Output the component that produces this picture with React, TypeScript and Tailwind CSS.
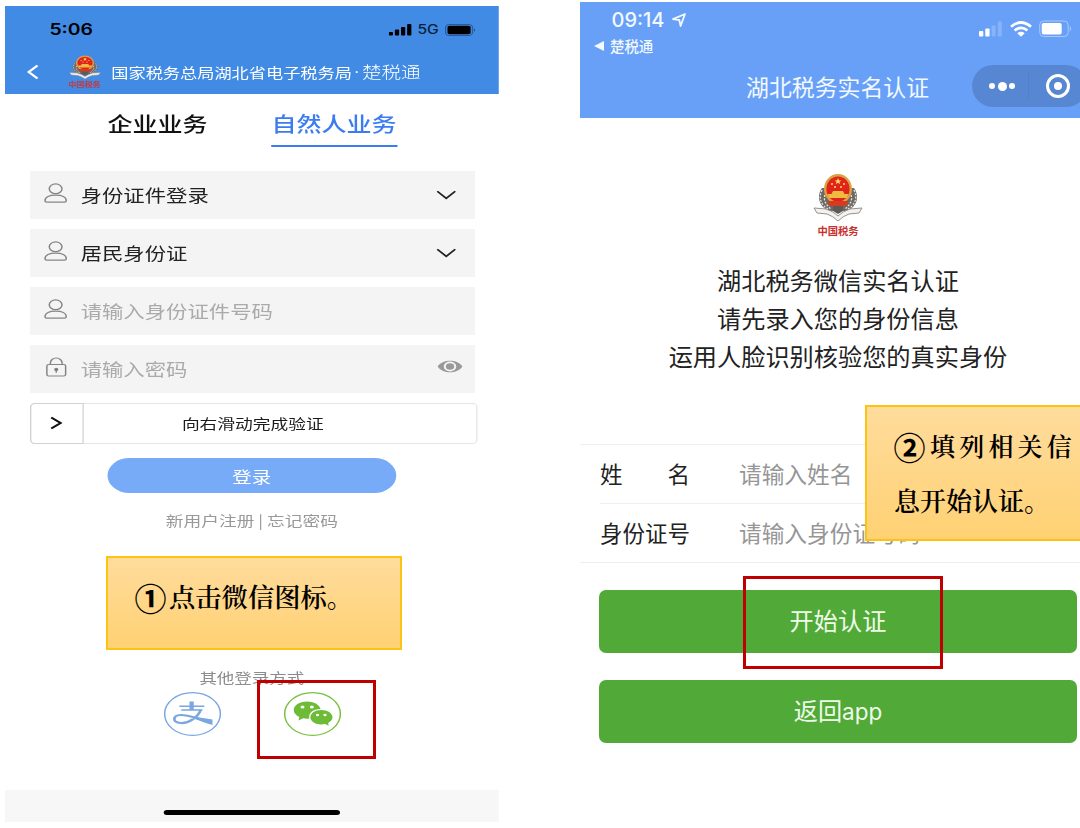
import React from "react";

const sans = "font-['Noto_Sans_CJK_SC',sans-serif]";
const serif = "font-['Noto_Serif_CJK_SC','Noto_Sans_CJK_SC',serif]";

// Emblema de la administración tributaria
const Emblem = ({ className }: { className: string }) => (
  <svg viewBox="0 0 50 50" preserveAspectRatio="none" className={className}>
    <path d="M9 15 C3 23 6 34 16 38 L34 38 C44 34 47 23 41 15 Z" fill="#6d6a66" />
    <path
      d="M9 17 C5 25 8 32 16 37 M41 17 C45 25 42 32 34 37 M12 22 C10 27 13 32 18 36 M38 22 C40 27 37 32 32 36"
      fill="none"
      stroke="#e6e2dc"
      strokeWidth={1.3}
      strokeDasharray="2 1.4"
    />
    <path
      d="M1 35 L13 36 Q20 38 25 43 Q30 38 37 36 L49 35 L46 40 L36 41 Q30 43 25 48 Q20 43 14 41 L4 40 Z"
      fill="#f4f2ef"
      stroke="#8b8783"
      strokeWidth={0.9}
    />
    <path d="M20 32 h10 v6 l-5 3 l-5 -3 Z" fill="#5d5a56" />
    <ellipse cx={25} cy={16} rx={14} ry={15} fill="#dba143" />
    <ellipse cx={25} cy={16} rx={11.6} ry={12.6} fill="#e0241b" />
    <path d="M14 28 h22 l-3 5 h-16 Z" fill="#d63a20" />
    <path
      d="M25 5 l1 2.4 h2.4 l-2 1.5 l.8 2.4 l-2.2 -1.5 l-2.2 1.5 l.8 -2.4 l-2 -1.5 h2.4 Z"
      fill="#f8dc63"
    />
    <circle cx={19} cy={11} r={1} fill="#f8dc63" />
    <circle cx={31} cy={11} r={1} fill="#f8dc63" />
    <circle cx={22} cy={14} r={1} fill="#f8dc63" />
    <circle cx={28} cy={14} r={1} fill="#f8dc63" />
    <path d="M20 18 h10 l1.5 3 h4 l-1.5 4 h-18 l-1.5 -4 h4 Z" fill="#f0b93f" />
  </svg>
);

const UserIcon = () => (
  <svg
    viewBox="0 0 19 20"
    className="h-5 w-[19px]"
    fill="none"
    stroke="#858585"
    strokeWidth={1.2}
  >
    <ellipse cx={9.5} cy={5.8} rx={5.1} ry={4.9} />
    <path d="M1 17.8 C1 14 4.5 12.2 9.5 12.2 S18 14 18 17.8 Q18 19.2 16.6 19.2 H2.4 Q1 19.2 1 17.8 Z" />
  </svg>
);

const LockIcon = () => (
  <svg
    viewBox="0 0 19 20"
    className="h-5 w-[19px]"
    fill="none"
    stroke="#858585"
    strokeWidth={1.2}
  >
    <rect x={2.5} y={7.5} width={15} height={11.5} rx={1.5} />
    <path d="M5.3 7.5 V6 a4.7 5 0 0 1 9.4 0 V7.5" />
    <path d="M10 15.8 V13" />
    <circle cx={10} cy={12.4} r={1.1} fill="#666" />
  </svg>
);

const ChevronDown = () => (
  <svg
    viewBox="0 0 16 10"
    className="h-2.5 w-4"
    fill="none"
    stroke="#222"
    strokeWidth={1.6}
  >
    <path d="M.8 1.2 L8 8.4 L15.2 1.2" />
  </svg>
);

const EyeIcon = () => (
  <svg viewBox="0 0 20 13" className="h-[13px] w-5">
    <path d="M0 6.5 C4 -1.2 16 -1.2 20 6.5 C16 14.2 4 14.2 0 6.5 Z" fill="#999" />
    <ellipse cx={10} cy={6.5} rx={5} ry={4.9} fill="#f4f4f4" />
    <circle cx={10} cy={6.5} r={3.3} fill="#999" />
  </svg>
);

const fields = [
  { text: "身份证件登录", color: "text-[#222]", icon: <UserIcon />, end: <ChevronDown /> },
  { text: "居民身份证", color: "text-[#222]", icon: <UserIcon />, end: <ChevronDown /> },
  { text: "请输入身份证件号码", color: "text-[#aaa]", icon: <UserIcon />, end: null },
  { text: "请输入密码", color: "text-[#aaa]", icon: <LockIcon />, end: <EyeIcon /> },
];

const LoginHeader = () => (
  <header className="h-[88px] bg-[#418be4]">
    <div className="flex h-12 items-center pl-[35.5px] pr-[18px] text-black">
      <span className="font-['Inter',sans-serif] text-[15.5px] font-semibold">5:06</span>
      <svg viewBox="0 0 19 12" className="ml-auto h-3 w-[19px]">
        <rect x={0} y={8} width={3.4} height={3.6} rx={0.8} />
        <rect x={4.9} y={5.6} width={3.4} height={6} rx={0.8} />
        <rect x={9.8} y={3} width={3.4} height={8.6} rx={0.8} />
        <rect x={14.7} y={0} width={3.4} height={11.6} rx={0.8} />
      </svg>
      <span className="ml-[4px] pt-0.5 font-['Inter',sans-serif] text-[12.5px] font-medium text-[#0b1f3d]">
        5G
      </span>
      <svg viewBox="0 0 25 12" className="ml-[5px] h-3 w-[25px]">
        <rect x={0.5} y={0.5} width={21.5} height={11} rx={3} fill="none" stroke="#2a5c98" />
        <rect x={2} y={1.8} width={18.5} height={8.4} rx={1.6} />
        <path d="M23.2 4.4 Q25 6 23.2 7.6 Z" fill="#1f4a80" />
      </svg>
    </div>
    <div className="flex h-9 items-center pl-[17px] text-white">
      <svg
        viewBox="0 0 10 16"
        className="h-4 w-2.5"
        fill="none"
        stroke="currentColor"
        strokeWidth={2}
      >
        <path d="M9 1.5 L2 8 L9 14.5" />
      </svg>
      <div className="ml-[23.5px] flex w-[26px] flex-col items-center">
        <Emblem className="h-[25px] w-[26px]" />
        <span className="h-[9px] whitespace-nowrap text-[6.5px] font-bold leading-[9px] text-[#c33a3e]">
          中国税务
        </span>
      </div>
      <span className="ml-[8.5px] w-[192.5px] shrink-0 whitespace-nowrap text-[13.75px] leading-5">
        国家税务总局湖北省电子税务局
      </span>
      <span className="w-2 shrink-0 text-center font-['Inter',sans-serif] text-[14px] leading-5">
        ·
      </span>
      <span className="whitespace-nowrap text-[15.7px] font-light leading-5">楚税通</span>
    </div>
  </header>
);

const LoginPhone = () => (
  <div className={`flex h-[816px] w-[395px] origin-top-left scale-x-125 flex-col ${sans}`}>
    <LoginHeader />

    {/* Pestañas */}
    <div className="flex h-[77px] pl-[82px] text-[20px] font-medium leading-[60px]">
      <span className="w-[130.5px] text-[#111]">企业业务</span>
      <span className="h-[53px] w-[101.5px] border-b-2 border-[#3b7cf0] pl-[0.8px] text-[#3b7cf0]">
        自然人业务
      </span>
    </div>

    {/* Formulario */}
    <div className="flex flex-col gap-[9.5px] pl-5">
      {fields.map((field) => (
        <div
          key={field.text}
          className="flex h-[48.5px] w-[355.5px] items-center bg-[#f4f4f4] pl-[10.5px] pr-[14.5px]"
        >
          <div className="-mt-1">{field.icon}</div>
          <span className={`ml-[11px] flex-1 text-[17.1px] leading-6 ${field.color}`}>
            {field.text}
          </span>
          {field.end && <div className={field.text === "请输入密码" ? "-mr-[5px] -mt-1" : ""}>{field.end}</div>}
        </div>
      ))}
    </div>
    <div className="ml-[19.5px] mt-[9.5px] flex h-[41px] w-[358.5px] shrink-0 items-center rounded border border-[#e6e6e6]">
      <div className="-ml-px flex h-[41px] w-[43px] items-center justify-center rounded-l-sm border border-[#d2d2d2]">
        <svg
          viewBox="0 0 10 14"
          className="h-3.5 w-2.5"
          fill="none"
          stroke="#111"
          strokeWidth={1.9}
        >
          <path d="M1 1.5 L8.5 7 L1 12.5" />
        </svg>
      </div>
      <span className="ml-[79px] text-[14.2px] leading-5 text-[#1c1c1c]">向右滑动完成验证</span>
    </div>
    <button className="ml-[82px] mt-[14px] h-[35px] w-[231px] shrink-0 rounded-full bg-[#77abf8] pt-px text-[15.6px] leading-5 text-white">
      登录
    </button>
    <div className="mt-[17.5px] text-center text-[14.2px] leading-5 text-[#999]">
      新用户注册 | 忘记密码
    </div>

    {/* Otros métodos de acceso */}
    <div className="mt-[137px] pl-[155.5px] text-[14px] leading-5 text-[#8c8c8c]">
      其他登录方式
    </div>
    <div className="mt-[5px] flex gap-[50px] pl-[127px]">
      <svg viewBox="0 0 46 44" className="h-11 w-[46px]" fill="none" stroke="#7aa7e0">
        <ellipse cx={23} cy={22} rx={22.3} ry={21.3} strokeWidth={1.2} />
        <path d="M12.5 14.2 H32.5 M14 18 H31" strokeWidth={1.4} />
        <path d="M22.3 9.5 V18" strokeWidth={3.4} />
        <path
          d="M29.5 18 C27.5 25 20 31.5 13.5 31 C6.5 30.2 7 23.5 13.5 23 C20 22.8 28 27.5 38.5 30"
          strokeWidth={2.2}
        />
        <path d="M26 25 L39 27.5 V33 Q33 31 25 27 Z" fill="#7aa7e0" stroke="none" />
      </svg>
      <svg viewBox="0 0 46 44" className="h-11 w-[46px]">
        <ellipse cx={23} cy={22} rx={22.3} ry={21.3} fill="none" stroke="#7ac143" strokeWidth={1.2} />
        <path
          d="M18.5 9.5 C12.5 9.5 8 13.2 8 18 C8 21 9.8 23.5 12.5 25 L11.7 28.5 L15.5 26.3 Q18 27 20.5 26.6 C19.5 20.5 24 16.8 29.5 17 C28.5 12.5 24 9.5 18.5 9.5 Z"
          fill="#6dbb36"
        />
        <path
          d="M30 18 C25 18 21.3 21.2 21.3 25.2 C21.3 29.2 25 32.4 30 32.4 Q31.5 32.4 33 32 L36 33.7 L35.5 31 C37.5 29.500 39 27.6 39 25.2 C39 21.2 35 18 30 18 Z"
          fill="#6dbb36"
        />
        <g fill="#fff">
          <circle cx={15} cy={15} r={1.6} />
          <circle cx={22.5} cy={15} r={1.6} />
          <circle cx={27} cy={23} r={1.3} />
          <circle cx={33} cy={23} r={1.3} />
        </g>
      </svg>
    </div>

    <footer className="mt-auto flex h-8 shrink-0 justify-center bg-[#f7f7f7] pt-5">
      <div className="h-[5px] w-[141px] rounded-full bg-black" />
    </footer>
  </div>
);

const AuthHeader = () => (
  <header className="flex h-[116px] flex-col bg-[#68a0f8] text-[#f2f9ff]">
    <div className="flex h-[62px] justify-between pl-[14px] pr-[8px]">
      <div>
        <div className="flex h-9 items-center pl-[17.5px]">
          <span className="font-['Inter',sans-serif] text-[20px] font-medium">09:14</span>
          <svg
            viewBox="0 0 14 14"
            className="ml-[7px] h-3.5 w-3.5"
            fill="none"
            stroke="currentColor"
            strokeWidth={1.8}
            strokeLinejoin="round"
          >
            <path d="M13 1 L1 6.2 L7.3 7 L8.6 13 Z" />
          </svg>
        </div>
        <div className="flex h-4 items-center text-[14.4px] font-medium leading-4">
          <svg viewBox="0 0 10 10" className="mr-[6px] h-2.5 w-2.5" fill="currentColor">
            <path d="M0 5 L10 0 V10 Z" />
          </svg>
          楚税通
        </div>
      </div>
      <div className="flex h-[54px] items-center gap-[7px]">
        <svg viewBox="0 0 24 16" className="h-4 w-6" fill="#fff">
          <rect x={0} y={10} width={4.3} height={5.5} rx={1} />
          <rect x={6.3} y={7.5} width={4.3} height={8} rx={1} />
          <rect x={12.6} y={4.5} width={4} height={11} rx={1} opacity={0.2} />
          <rect x={18.8} y={0.5} width={4} height={15} rx={1} opacity={0.2} />
        </svg>
        <svg viewBox="0 0 22 16" className="h-4 w-[22px]" fill="none" stroke="#fff" strokeWidth={2.7}>
          <path d="M1 5.7 Q11 -2.7 21 5.7" />
          <path d="M4.6 9.5 Q11 4.3 17.4 9.5" />
          <path d="M11 15.8 L7.3 12.2 Q11 9.5 14.7 12.2 Z" fill="#fff" stroke="none" />
        </svg>
        <svg viewBox="0 0 33 18" className="h-[18px] w-[33px]">
          <rect x={0.7} y={1} width={28.5} height={15.5} rx={4} fill="none" stroke="#a6cafc" />
          <rect x={2.7} y={3} width={20} height={11.5} rx={2} fill="#fff" />
          <path d="M30.8 6 Q33.5 8.7 30.8 11.5 Z" fill="#a6cafc" />
        </svg>
      </div>
    </div>
    <div className="flex items-center pt-px">
      <h1 className="ml-[166px] w-[226px] shrink-0 text-[22.9px] leading-[42px]">
        湖北税务实名认证
      </h1>
      <div className="flex h-[42px] w-[115px] shrink-0 items-center rounded-full bg-[#5787d2] text-white">
        <div className="ml-[17px] flex items-center gap-[2.5px]">
          <div className="size-[6px] rounded-full bg-white" />
          <div className="size-[9px] rounded-full bg-white" />
          <div className="size-[6px] rounded-full bg-white" />
        </div>
        <div className="ml-[13px] h-7 w-px bg-[#5180c8]" />
        <div className="ml-[17px] flex size-[24px] items-center justify-center rounded-full border-[3px] border-white">
          <div className="size-[8px] rounded-full bg-white" />
        </div>
      </div>
    </div>
  </header>
);

const AuthPhone = () => (
  <div className={`h-[826px] w-[500px] overflow-hidden ${sans}`}>
    <AuthHeader />

    {/* Logo y descripción */}
    <div className="ml-[7px] flex w-[502px] flex-col items-center pt-[55px]">
      <Emblem className="h-[50px] w-[50px]" />
      <span className="h-[17px] text-[10.3px] font-bold leading-[16px] text-[#c9302c]">
        中国税务
      </span>
    </div>
    <div className="mt-[21px] w-[516px] text-center text-[24.2px] leading-[37.9px] text-[#222]">
      <p>湖北税务微信实名认证</p>
      <p>请先录入您的身份信息</p>
      <p>运用人脸识别核验您的真实身份</p>
    </div>

    {/* Datos personales */}
    <div className="mt-[69px] border-y border-[#eee] text-[22.5px] leading-[57px] text-[#222]">
      <div className="flex h-[58px] pl-5">
        <div className="flex w-[90px] justify-between">
          <span>姓</span>
          <span>名</span>
        </div>
        <span className="ml-[49px] text-[22.7px] text-[#969696]">请输入姓名</span>
      </div>
      <div className="ml-5 flex h-[59px] border-t border-[#f0f0f0]">
        <span className="w-[91px]">身份证号</span>
        <span className="ml-[48px] text-[22.7px] text-[#969696]">请输入身份证号码</span>
      </div>
    </div>

    {/* Botones */}
    <div className="ml-[19px] mt-[27.5px] flex w-[478px] flex-col gap-[27px] text-[24.2px] leading-[59px] text-[#eefbe9]">
      <button className="h-[63px] rounded-[7px] bg-[#51a938] pb-1">开始认证</button>
      <button className="h-[63px] rounded-[7px] bg-[#51a938] pb-1">
        返回<span className="font-['Inter',sans-serif] text-[22.5px]">app</span>
      </button>
    </div>
  </div>
);

const callout = `absolute border-2 border-[#fdc312] bg-gradient-to-b from-[#ffdc9c] to-[#ffd173] font-semibold text-black ${serif}`;

const Digit = ({ value }: { value: string }) => (
  <span
    className={`flex w-[31px] shrink-0 justify-center text-[32px] font-bold leading-none tracking-normal ${sans}`}
  >
    {value}
  </span>
);

export default function App() {
  return (
    <div className="relative flex h-[828px] w-[1080px] overflow-hidden bg-white">
      <div className="ml-[4.5px] mt-[5.5px] w-[575.5px] shrink-0">
        <LoginPhone />
      </div>
      <div className="mt-[2px] shrink-0">
        <AuthPhone />
      </div>

      {/* Paso 1 */}
      <div className={`left-[106px] top-[556px] h-[94px] w-[296px] pl-[27px] pt-[19px] ${callout}`}>
        <div className="flex h-10 items-center whitespace-nowrap text-[26.3px]">
          <Digit value="①" />
          <span className="ml-[3px]">点击微信图标。</span>
        </div>
      </div>
      <div className="absolute left-[257px] top-[680px] h-[79px] w-[119px] border-[3.5px] border-[#c00000]" />

      {/* Paso 2 */}
      <div className={`left-[865px] top-[405px] h-[136px] w-[230px] pl-[27px] pt-[19px] ${callout}`}>
        <div className="flex h-10 items-center whitespace-nowrap text-[25px] tracking-[4.2px]">
          <Digit value="②" />
          <span className="ml-[5px]">填列相关信</span>
        </div>
        <div className="mt-[14px] h-10 whitespace-nowrap text-[26px] leading-10">
          息开始认证。
        </div>
      </div>
      <div className="absolute left-[743px] top-[576px] h-[93px] w-[200px] border-[3.5px] border-[#c00000]" />
    </div>
  );
}
